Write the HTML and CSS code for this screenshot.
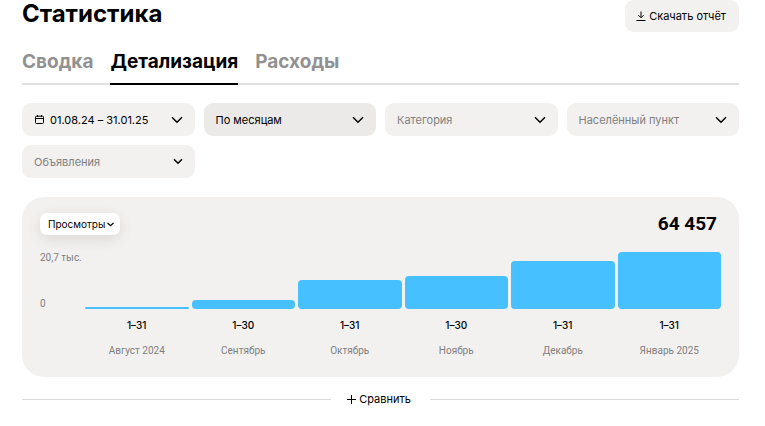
FILE: index.html
```html
<!DOCTYPE html>
<html lang="ru">
<head>
    <meta charset="UTF-8">
    <meta name="viewport" content="width=device-width, initial-scale=1.0">
    <title>Статистика</title>
    <link rel="stylesheet" href="styles.css">
</head>
<body>
    <main class="page">
        <header class="header">
            <h1>Статистика</h1>
            <button type="button" class="download">
                <svg class="icon" width="10" height="11" viewBox="0 0 10 11"><path d="M5 0.5v6M2.4 4.2L5 6.8l2.6-2.6M0.5 9.5h9"/></svg>
                Скачать отчёт
            </button>
        </header>

        <nav class="tabs">
            <a href="#summary" class="tab">Сводка</a>
            <a href="#details" class="tab active" aria-current="page">Детализация</a>
            <a href="#expenses" class="tab">Расходы</a>
        </nav>

        <div class="filters">
            <button type="button" class="field date">
                <svg class="icon" width="9" height="9" viewBox="0 0 9 9"><rect x="0.5" y="1.2" width="8" height="7.3" rx="1"/><path d="M0.5 3.5h8M2.5 0v2M6.5 0v2"/></svg>
                <span class="date-text">01.08.24 – 31.01.25</span>
                <svg class="chevron" width="12" height="8" viewBox="0 0 12 8"><path d="M1 1.2l5 5 5-5"/></svg>
            </button>
            <div class="select">
                <select class="field selected" aria-label="Группировка">
                    <option>По месяцам</option>
                </select>
                <svg class="chevron" width="12" height="8" viewBox="0 0 12 8"><path d="M1 1.2l5 5 5-5"/></svg>
            </div>
            <div class="select">
                <select class="field" aria-label="Категория">
                    <option>Категория</option>
                </select>
                <svg class="chevron" width="12" height="8" viewBox="0 0 12 8"><path d="M1 1.2l5 5 5-5"/></svg>
            </div>
            <div class="select">
                <select class="field" aria-label="Населённый пункт">
                    <option>Населённый пункт</option>
                </select>
                <svg class="chevron" width="12" height="8" viewBox="0 0 12 8"><path d="M1 1.2l5 5 5-5"/></svg>
            </div>
            <div class="select">
                <select class="field" aria-label="Объявления">
                    <option>Объявления</option>
                </select>
                <svg class="chevron" width="10" height="7" viewBox="0 0 10 7"><path d="M1 1.2l4 4 4-4"/></svg>
            </div>
        </div>

        <section class="card">
            <div class="card-head">
                <button type="button" class="metric">
                    Просмотры
                    <svg class="chevron" width="7" height="5" viewBox="0 0 7 5"><path d="M0.5 1l3 2.7 3-2.7"/></svg>
                </button>
                <strong class="total">64 457</strong>
            </div>
            <div class="chart">
                <div class="axis">
                    <span>20,7 тыс.</span>
                    <span>0</span>
                </div>
                <div class="bars">
                    <div class="bar" style="height: 3%"></div>
                    <div class="bar" style="height: 15%"></div>
                    <div class="bar" style="height: 51%"></div>
                    <div class="bar" style="height: 58%"></div>
                    <div class="bar" style="height: 85%"></div>
                    <div class="bar" style="height: 100%"></div>
                </div>
                <div class="labels">
                    <div class="label"><span class="days">1–31</span><span class="month">Август 2024</span></div>
                    <div class="label"><span class="days">1–30</span><span class="month">Сентябрь</span></div>
                    <div class="label"><span class="days">1–31</span><span class="month">Октябрь</span></div>
                    <div class="label"><span class="days">1–30</span><span class="month">Ноябрь</span></div>
                    <div class="label"><span class="days">1–31</span><span class="month">Декабрь</span></div>
                    <div class="label"><span class="days">1–31</span><span class="month">Январь 2025</span></div>
                </div>
            </div>
        </section>

        <div class="compare">
            <button type="button" class="compare-button">
                <svg class="icon" width="9" height="9" viewBox="0 0 9 9"><path d="M4.5 0v9M0 4.5h9"/></svg>
                Сравнить
            </button>
        </div>
    </main>
</body>
</html>
```
FILE: styles.css
```css
* {
    box-sizing: border-box;
}
body {
    margin: 0;
    background: #fff;
    color: #000;
    font-family: Inter, "Liberation Sans", sans-serif;
    font-size: 11px;
}
button, select {
    border: none;
    margin: 0;
    font: inherit;
    color: inherit;
    cursor: pointer;
}
svg {
    fill: none;
    stroke: #000;
    flex: none;
}
.page {
    padding: 0 26px 18px 22px;
}

/* header */
.header {
    display: flex;
    justify-content: space-between;
    align-items: flex-start;
}
h1 {
    margin: 0;
    font-size: 24px;
    line-height: 28px;
    font-weight: 700;
}
.download {
    display: flex;
    align-items: center;
    gap: 3px;
    height: 32px;
    padding: 0 13px 0 11px;
    border-radius: 9px;
    background: #f2f1f0;
}

/* tabs */
.tabs {
    display: flex;
    gap: 17px;
    margin-top: 18px;
    box-shadow: inset 0 -2px #e0e0e0;
}
.tab {
    padding-bottom: 9px;
    border-bottom: 2px solid transparent;
    color: #919191;
    font-size: 19px;
    line-height: 24px;
    font-weight: 700;
    text-decoration: none;
}
.tab.active {
    color: #000;
    border-bottom-color: #000;
}

/* filters */
.filters {
    display: grid;
    grid-template-columns: repeat(4, 1fr);
    gap: 9px;
    margin-top: 18px;
}
.select {
    display: grid;
    align-items: center;
}
.select > * {
    grid-area: 1 / 1;
}
.select .chevron {
    justify-self: end;
    margin-right: 12px;
    pointer-events: none;
}
.field {
    width: 100%;
    height: 33px;
    padding: 0 12px;
    border-radius: 9px;
    background: #f2f1f0;
    appearance: none;
}
select.field {
    color: #808080;
}
select.selected {
    background: #ebeae8;
    color: #000;
}
.date {
    display: flex;
    align-items: center;
    gap: 6px;
    padding-left: 13px;
}
.date-text {
    flex: 1;
    text-align: left;
    white-space: nowrap;
}
.chevron {
    stroke-width: 1.5;
}

/* chart */
.card {
    margin-top: 19px;
    padding: 14px 18px 19px;
    border-radius: 22px;
    background: #f2f1f0;
    font-family: Roboto, "Liberation Sans", sans-serif;
}
.card-head {
    display: flex;
    justify-content: space-between;
    align-items: center;
}
.metric {
    display: flex;
    align-items: center;
    gap: 2px;
    height: 22px;
    padding: 0 6px 0 8px;
    border-radius: 7px;
    background: #fff;
    box-shadow: 0 4px 14px rgba(0, 0, 0, 0.1);
    font-family: Inter, "Liberation Sans", sans-serif;
    font-size: 10px;
}
.metric .chevron {
    stroke-width: 1.2;
}
.total {
    padding-right: 4px;
    font-size: 19px;
    line-height: 26px;
}
.chart {
    display: grid;
    grid-template-columns: 45px 1fr;
    margin-top: 15px;
}
.axis {
    display: flex;
    flex-direction: column;
    justify-content: space-between;
    color: #808080;
    font-size: 10px;
    line-height: 11px;
    white-space: nowrap;
}
.bars {
    display: flex;
    align-items: flex-end;
    gap: 3px;
    height: 57px;
}
.bar {
    flex: 1;
    min-height: 2px;
    border-radius: 4px;
    background: #47c0ff;
}
.labels {
    grid-column: 2;
    display: flex;
    gap: 3px;
    margin-top: 9px;
}
.label {
    flex: 1;
    display: flex;
    flex-direction: column;
    gap: 10px;
    text-align: center;
    font-size: 10px;
    line-height: 15px;
}
.days {
    font-family: Inter, "Liberation Sans", sans-serif;
    font-weight: 500;
}
.month {
    color: #808080;
}

/* compare */
.compare {
    display: flex;
    align-items: center;
    margin-top: 13px;
}
.compare::before,
.compare::after {
    content: "";
    flex: 1;
    height: 1px;
    background: #d9d9d9;
}
.compare-button {
    display: flex;
    align-items: center;
    gap: 3px;
    padding: 0 19px 0 16px;
    background: none;
    line-height: 18px;
}
```
